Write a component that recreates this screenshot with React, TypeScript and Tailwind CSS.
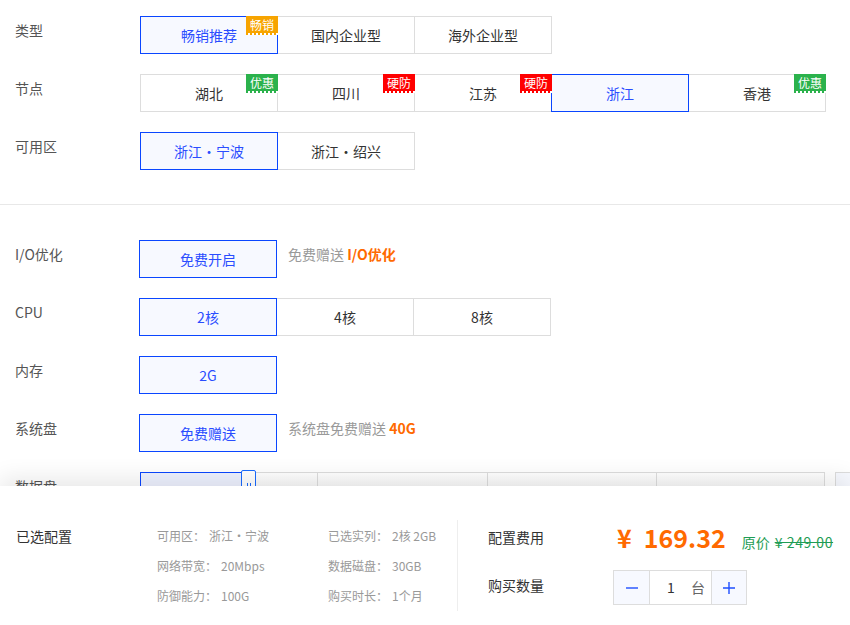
import type { ReactNode } from 'react'

type Tone = 'hot' | 'sale' | 'guard'

interface Choice {
  label: string
  active?: boolean
  tag?: { text: string; tone: Tone }
}

// solid body + perforated bottom edge for each tag colour
const TAG_BODY: Record<Tone, string> = {
  hot: 'bg-[#f7a400]',
  sale: 'bg-[#2bb24c]',
  guard: 'bg-[#ff0000]',
}
const TAG_EDGE: Record<Tone, string> = {
  hot: 'bg-[repeating-linear-gradient(90deg,#f7a400_0_2px,#ffffff_2px_4px)]',
  sale: 'bg-[repeating-linear-gradient(90deg,#2bb24c_0_2px,#ffffff_2px_4px)]',
  guard: 'bg-[repeating-linear-gradient(90deg,#ff0000_0_2px,#ffffff_2px_4px)]',
}

const typeChoices: Choice[] = [
  { label: '畅销推荐', active: true, tag: { text: '畅销', tone: 'hot' } },
  { label: '国内企业型' },
  { label: '海外企业型' },
]

const nodeChoices: Choice[] = [
  { label: '湖北', tag: { text: '优惠', tone: 'sale' } },
  { label: '四川', tag: { text: '硬防', tone: 'guard' } },
  { label: '江苏', tag: { text: '硬防', tone: 'guard' } },
  { label: '浙江', active: true },
  { label: '香港', tag: { text: '优惠', tone: 'sale' } },
]

const zoneChoices: Choice[] = [{ label: '浙江·宁波', active: true }, { label: '浙江·绍兴' }]

const cpuChoices: Choice[] = [{ label: '2核', active: true }, { label: '4核' }, { label: '8核' }]

const summary = [
  ['可用区：', '浙江·宁波', '已选实列：', '2核 2GB'],
  ['网络带宽：', '20Mbps', '数据磁盘：', '30GB'],
  ['防御能力：', '100G', '购买时长：', '1个月'],
]

function Tag({ text, tone }: { text: string; tone: Tone }) {
  return (
    <span className="absolute -right-px -top-px z-20 flex w-[32px] flex-col">
      <span className={`h-[17px] text-center text-[12px] leading-[17px] text-white ${TAG_BODY[tone]}`}>{text}</span>
      <span className={`h-[2px] ${TAG_EDGE[tone]}`} />
    </span>
  )
}

function Option({ label, active, tag }: Choice) {
  return (
    <div
      className={`relative -ml-px flex h-[38px] w-[138px] shrink-0 items-center justify-center border text-[14px] first:ml-0 ${
        active ? 'z-10 border-[#0a46ff] bg-[#f7f9ff] text-[#2a4dff]' : 'border-[#dddddd] bg-white text-[#333333]'
      }`}
    >
      {label}
      {tag && <Tag text={tag.text} tone={tag.tone} />}
    </div>
  )
}

function Row({ label, width, children }: { label: string; width: string; children: ReactNode }) {
  return (
    <div className="flex">
      <div className={`shrink-0 pt-[3px] text-[14px] leading-[22px] text-[#555555] ${width}`}>{label}</div>
      <div className="flex items-start">{children}</div>
    </div>
  )
}

function Note({ text, strong }: { text: string; strong: string }) {
  return (
    <div className="ml-[11px] pt-[3px] text-[14px] leading-[22px] text-[#999999]">
      {text} <span className="font-bold text-[#ff6a00]">{strong}</span>
    </div>
  )
}

function DiskSlider() {
  const marks = [
    { w: 'w-[177px]', t: '50G' },
    { w: 'w-[170px]', t: '100G' },
    { w: 'w-[169px]', t: '150G' },
    { w: 'w-[168px]', t: '200G' },
  ]
  return (
    <div className="ml-px flex">
      <div className="relative flex h-[32px] border-t border-l border-[#dddddd] bg-gradient-to-b from-white to-[#f1f1f1]">
        {marks.map(m => (
          <div key={m.t} className={`${m.w} border-r border-[#dddddd] pr-[10px] pt-[11px] text-right text-[12px] leading-[20px] text-[#333333]`}>
            {m.t}
          </div>
        ))}
        {/* filled part of the track */}
        <div className="absolute -left-px -top-px h-[33px] w-[102px] border-t border-l border-[#0a46ff] bg-[#eef2ff]" />
        {/* drag handle */}
        <div className="absolute left-[100px] top-[-3px] flex h-[36px] w-[15px] justify-center gap-[2px] rounded-t-[2px] border border-[#1a6bff] bg-white pt-[12px]">
          <span className="h-[8px] w-px bg-[#1a6bff]" />
          <span className="h-[8px] w-px bg-[#1a6bff]" />
        </div>
      </div>
      <div className="ml-[10px] h-[32px] w-[60px] border border-[#dddddd] bg-[#f7f9ff]" />
    </div>
  )
}

function Stepper() {
  return (
    <div className="flex h-[35px] border border-[#dddddd] text-[14px]">
      <div className="flex w-[35px] items-center justify-center bg-[#f7f9ff]">
        <svg width="14" height="14" viewBox="0 0 14 14">
          <path d="M1 7h12" stroke="#1f4fff" strokeWidth="1.4" />
        </svg>
      </div>
      <div className="flex w-[63px] items-center justify-between border-x border-[#dddddd] pl-[17px] pr-[6px]">
        <span className="text-[#333333]">1</span>
        <span className="text-[#666666]">台</span>
      </div>
      <div className="flex w-[34px] items-center justify-center bg-[#f7f9ff]">
        <svg width="14" height="14" viewBox="0 0 14 14">
          <path d="M1 7h12M7 1v12" stroke="#1f4fff" strokeWidth="1.4" />
        </svg>
      </div>
    </div>
  )
}

export default function App() {
  return (
    <div className="relative h-screen overflow-hidden bg-white font-['Noto_Sans_CJK_SC',sans-serif]">
      {/* region / node */}
      <div className="flex flex-col gap-[20px] border-b border-[#e8e8e8] pb-[34px] pl-[15px] pt-[16px]">
        <Row label="类型" width="w-[125px]">
          {typeChoices.map(c => <Option key={c.label} {...c} />)}
        </Row>
        <Row label="节点" width="w-[125px]">
          {nodeChoices.map(c => <Option key={c.label} {...c} />)}
        </Row>
        <Row label="可用区" width="w-[125px]">
          {zoneChoices.map(c => <Option key={c.label} {...c} />)}
        </Row>
      </div>

      {/* instance spec */}
      <div className="flex flex-col gap-[20px] pl-[15px] pt-[35px]">
        <Row label="I/O优化" width="w-[124px]">
          <Option label="免费开启" active />
          <Note text="免费赠送" strong="I/O优化" />
        </Row>
        <Row label="CPU" width="w-[124px]">
          {cpuChoices.map(c => <Option key={c.label} {...c} />)}
        </Row>
        <Row label="内存" width="w-[124px]">
          <Option label="2G" active />
        </Row>
        <Row label="系统盘" width="w-[124px]">
          <Option label="免费赠送" active />
          <Note text="系统盘免费赠送" strong="40G" />
        </Row>
        <Row label="数据盘" width="w-[124px]">
          <DiskSlider />
        </Row>
      </div>

      {/* order bar pinned to the bottom */}
      <div className="absolute inset-x-0 bottom-0 z-30 flex h-[139px] bg-white pt-[34px] shadow-[0_-8px_22px_rgba(0,0,0,0.09)]">
        <div className="w-[157px] shrink-0 pl-[16px] pt-[6px] text-[14px] leading-[20px] text-[#333333]">已选配置</div>
        <div className="grid h-[96px] grid-cols-[171px_129px] content-start gap-y-[10px] pt-[6px] text-[12px] leading-[20px] text-[#999999]">
          {summary.map(r => (
            <div key={r[0]} className="contents">
              <div>
                {r[0]}
                <span className="ml-[4px]">{r[1]}</span>
              </div>
              <div>
                {r[2]}
                <span className="ml-[4px]">{r[3]}</span>
              </div>
            </div>
          ))}
        </div>
        <div className="h-[91px] border-l border-[#eeeeee] pl-[30px]">
          <div className="flex h-[34px] items-center">
            <div className="w-[129px] text-[14px] text-[#333333]">配置费用</div>
            <div className="flex items-baseline font-bold text-[#ff6a00]">
              <span className="text-[25px] leading-[34px]">¥</span>
              <span className="ml-[12px] text-[25px] leading-[34px]">169.32</span>
              <span className="ml-[16px] text-[14px] font-normal text-[#1f9d55]">
                原价
                <span className="ml-[5px] tracking-[0.6px] line-through">¥ 249.00</span>
              </span>
            </div>
          </div>
          <div className="mt-[16px] flex items-center">
            <div className="w-[125px] pb-[4px] text-[14px] text-[#333333]">购买数量</div>
            <Stepper />
          </div>
        </div>
      </div>
    </div>
  )
}
